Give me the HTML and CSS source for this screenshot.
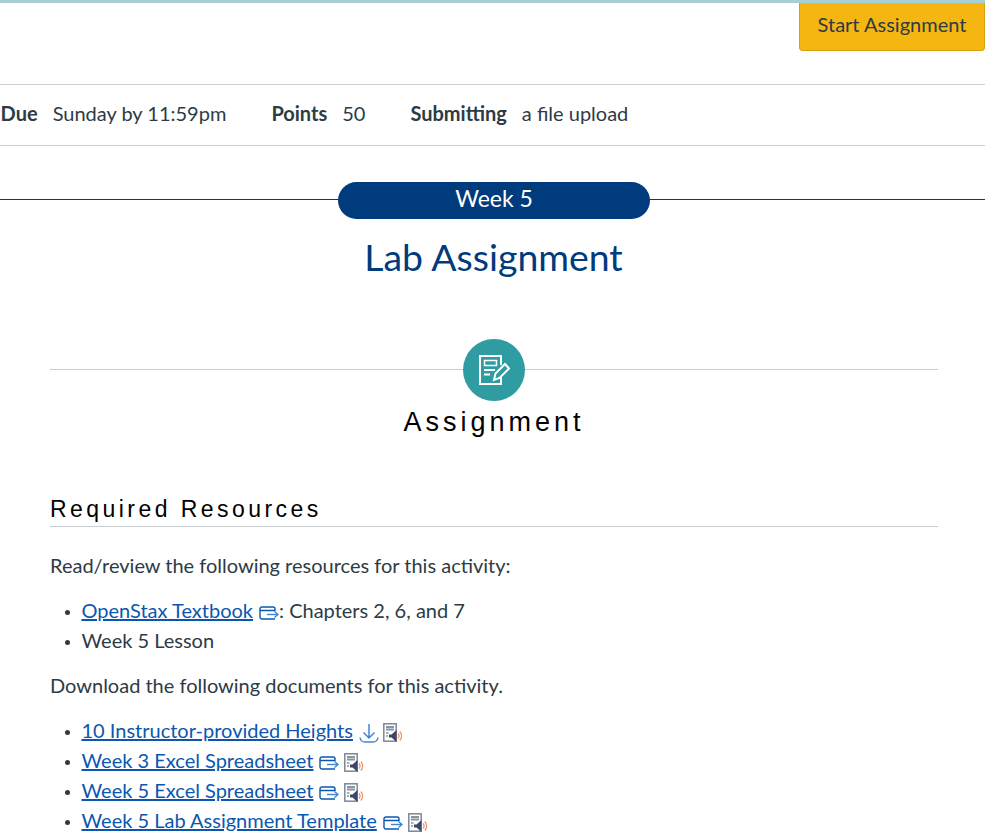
FILE: index.html
```html
<!DOCTYPE html>
<html lang="en">
<head>
<meta charset="utf-8">
<title>Lab Assignment</title>
<link rel="stylesheet" href="styles.css">
</head>
<body>
<svg class="defs" width="0" height="0" aria-hidden="true">
  <symbol id="ext" viewBox="0 0 20 14">
    <path d="M16 13H3a2 2 0 0 1-2-2V3a2 2 0 0 1 2-2h11a2 2 0 0 1 2 2v2M1 4.500h15" fill="none" stroke="#0b57b0" stroke-width="1.400"/>
    <path d="M8 8.500h11" fill="none" stroke="#3f86d6" stroke-width="1.400"/>
    <path d="M15.500 5.500l3.500 3-3.500 3" fill="none" stroke="#3f86d6" stroke-width="1.400"/>
  </symbol>
  <symbol id="aud" viewBox="0 0 20 20">
    <rect x="0.800" y="0.800" width="12.400" height="17.400" fill="#fff" stroke="#7d8794" stroke-width="1.500"/>
    <path d="M3 4h8M3 6.500h8" stroke="#8a93a0" stroke-width="1.800"/>
    <path d="M3 10h2.500M3 13h2" stroke="#8a93a0" stroke-width="1.300"/>
    <path d="M6 11.500h2.500l5-4.500v12l-5-4.500H6z" fill="#3b4668"/>
    <path d="M15 10.500a3.500 3.500 0 0 1 0 5M16.800 8.500a6.500 6.500 0 0 1 0 9" fill="none" stroke="#ef8f68" stroke-width="1.200"/>
  </symbol>
</svg>
<header class="topbar">
  <a class="start" href="#">Start Assignment</a>
</header>
<ul class="meta">
  <li><b>Due</b><span>Sunday by 11:59pm</span></li>
  <li><b>Points</b><span>50</span></li>
  <li><b>Submitting</b><span>a file upload</span></li>
</ul>
<div class="week"><span class="pill">Week 5</span></div>
<h1 class="title">Lab Assignment</h1>
<main class="content">
  <div class="badge-row">
    <span class="badge">
      <svg viewBox="0 0 34 34" width="34" height="34" aria-hidden="true">
        <path d="M24 12V3H3v28h21v-7" fill="none" stroke="#fff" stroke-width="2"/>
        <path d="M7.500 7.500h12v5h-12z" fill="none" stroke="#fff" stroke-width="1.500"/>
        <path d="M7 17h11M7 21.500h6" stroke="#fff" stroke-width="2"/>
        <path d="M17 27l1.500-6.500L28 11l4 4.500-9.500 9.500z" fill="#2e9ca1" stroke="#fff" stroke-width="2"/>
      </svg>
    </span>
  </div>
  <h2 class="section">Assignment</h2>
  <h3 class="sub">Required Resources</h3>
  <p>Read/review the following resources for this activity:</p>
  <ul class="list">
    <li><a href="#">OpenStax Textbook</a><svg class="ext"><use href="#ext"/></svg>: Chapters 2, 6, and 7</li>
    <li>Week 5 Lesson</li>
  </ul>
  <p>Download the following documents for this activity.</p>
  <ul class="list">
    <li><a href="#">10 Instructor-provided Heights</a><svg class="dl" viewBox="0 0 20 20"><path d="M10 1v14M4.500 9.500l5.500 5.500 5.500-5.500" fill="none" stroke="#3f86d6" stroke-width="1.500"/><path d="M1 14.500c.5 3 2.500 4.500 5 4.500h8c2.500 0 4.500-1.500 5-4.500" fill="none" stroke="#3f86d6" stroke-width="1.500"/></svg><svg class="aud"><use href="#aud"/></svg></li>
    <li><a href="#">Week 3 Excel Spreadsheet</a><svg class="ext"><use href="#ext"/></svg><svg class="aud"><use href="#aud"/></svg></li>
    <li><a href="#">Week 5 Excel Spreadsheet</a><svg class="ext"><use href="#ext"/></svg><svg class="aud"><use href="#aud"/></svg></li>
    <li><a href="#">Week 5 Lab Assignment Template</a><svg class="ext"><use href="#ext"/></svg><svg class="aud"><use href="#aud"/></svg></li>
  </ul>
</main>
</body>
</html>
```
FILE: styles.css
```css
* { box-sizing: border-box; }
html, body { height: 835px; overflow: hidden; }
body {
  margin: 0;
  font-family: Lato, "Liberation Sans", sans-serif;
  font-size: 20px;
  line-height: 30px;
  color: #2d3b45;
  background: #fff;
}
.defs { position: absolute; }
.topbar {
  display: flex;
  justify-content: flex-end;
  height: 85px;
  border-top: 3px solid #a6d0d6;
  border-bottom: 1px solid #c7cdd1;
}
.start {
  width: 186px;
  height: 48px;
  padding-bottom: 6px;
  display: flex;
  align-items: center;
  justify-content: center;
  background: #f6b611;
  border: 1px solid #d9a00f;
  border-top: 0;
  border-radius: 0 0 4px 4px;
  color: #2d3b45;
  text-decoration: none;
}
.meta {
  display: flex;
  gap: 45px;
  margin: 0;
  padding: 13px 0 15px 0.600px;
  list-style: none;
  border-bottom: 1px solid #c7cdd1;
  height: 61px;
}
.meta b { font-weight: 700; margin-right: 15px; }
.week {
  display: flex;
  justify-content: center;
  margin-top: 36px;
  padding-left: 3px;
  height: 37px;
  background: linear-gradient(#003b7e, #003b7e) 0 17px / 100% 1px no-repeat;
}
.pill {
  width: 312px;
  height: 37px;
  line-height: 33px;
  text-align: center;
  font-size: 23px;
  color: #fff;
  background: #003b7e;
  border-radius: 19px;
}
.title {
  margin: 16px 0 0;
  padding-left: 2px;
  font-size: 37.400px;
  line-height: 44px;
  font-weight: 400;
  text-align: center;
  color: #003b7e;
}
.content { padding: 0 47px 0 50px; }
.badge-row {
  display: flex;
  justify-content: center;
  margin-top: 60px;
  height: 62px;
  background: linear-gradient(#c7cdd1, #c7cdd1) 0 30px / 100% 1px no-repeat;
}
.badge {
  width: 62px;
  height: 62px;
  display: flex;
  align-items: center;
  justify-content: center;
  border-radius: 50%;
  background: #2e9ca1;
}
.section {
  margin: 4px 0 0;
  font-family: "Liberation Sans", Arial, sans-serif;
  font-size: 27px;
  line-height: 34px;
  font-weight: 400;
  letter-spacing: 4px;
  text-align: center;
  color: #000;
}
.sub {
  margin: 54px 0 0;
  padding-bottom: 1px;
  font-family: "Liberation Sans", Arial, sans-serif;
  font-size: 23px;
  line-height: 32px;
  font-weight: 400;
  letter-spacing: 3.450px;
  color: #000;
  border-bottom: 1px solid #c7cdd1;
}
p { margin: 15px 0 0; }
.sub + p { margin-top: 23px; }
.list { margin: 15px 0 0; padding: 0 0 0 31.500px; }
.list li::marker { font-size: 15px; }
.list a { color: #0b57b0; text-decoration: underline; }
.ext { width: 20px; height: 14px; margin-left: 6px; vertical-align: -2px; }
.dl { width: 20px; height: 20px; margin-left: 6px; vertical-align: -5px; }
.aud { width: 20px; height: 20px; margin-left: 5px; vertical-align: -5px; }
.dl + .aud { margin-left: 4px; }
```
